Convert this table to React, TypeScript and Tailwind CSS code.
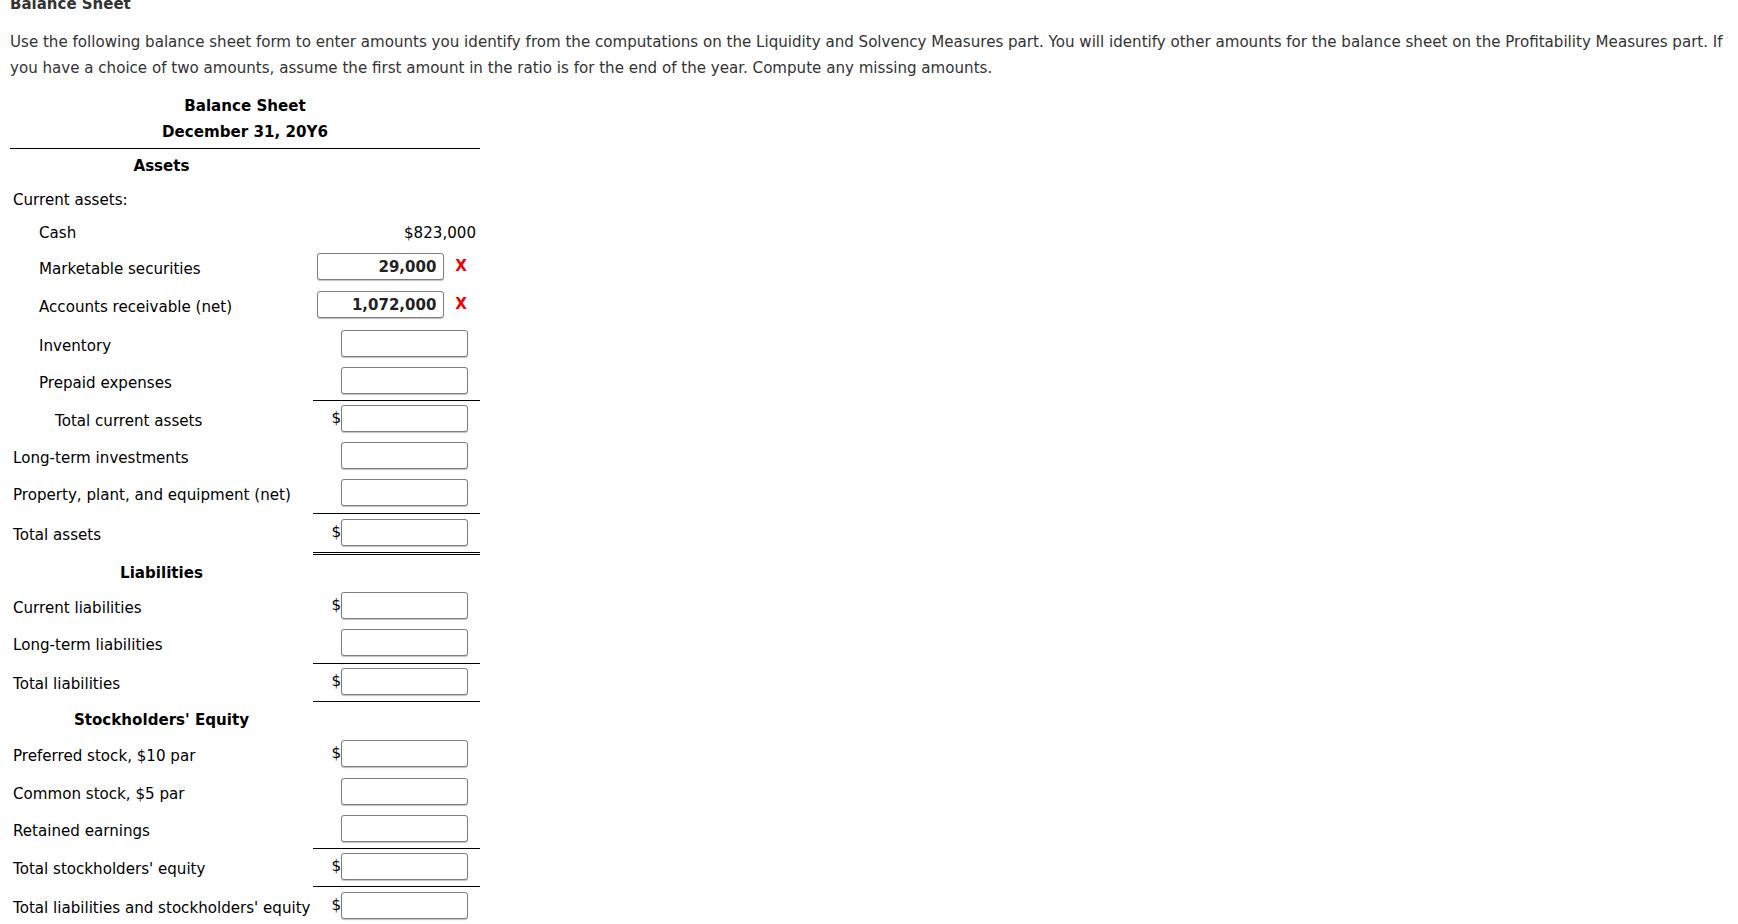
import React from "react";

type RowProps = {
  label?: string;
  indent?: number;
  h: number;
  pt?: number;
  dollar?: boolean;
  input?: string | null;
  wrong?: boolean;
  value?: string;
  lineTop?: boolean;
  lineBottom?: boolean;
  doubleBottom?: boolean;
};

function Box({ value }: { value?: string | null }) {
  return (
    <input
      type="text"
      readOnly
      defaultValue={value ?? ""}
      className="w-[127px] h-[27px] rounded-[3px] border border-[#7d7d7d] bg-white pr-[7px] text-right text-[15px] font-bold text-[#222] shadow-[0_1px_1px_rgba(0,0,0,0.25)] outline-none"
      style={{ fontFamily: '"DejaVu Sans", Verdana, sans-serif' }}
    />
  );
}

function Row({ label, indent = 0, h, pt = 4, dollar, input, wrong, value, lineTop, lineBottom, doubleBottom }: RowProps) {
  const pad = indent === 2 ? "pl-[45px]" : indent === 1 ? "pl-[29px]" : "pl-[3px]";
  const isText = input === undefined;
  return (
    <div className="flex" style={{ height: h }}>
      <div className={`w-[303px] ${pad} leading-[27px]`} style={{ paddingTop: pt + (lineTop ? 1 : 0) + 3 }}>
        {label}
      </div>
      <div
        className={`w-[167px] flex items-start justify-end ${lineTop ? "border-t border-black" : ""} ${
          lineBottom ? "border-b border-black" : ""
        } ${doubleBottom ? "border-b-[3px] border-double border-black" : ""}`}
        style={{ paddingTop: isText ? pt + 3 : pt, paddingRight: wrong ? 13 : 12 }}
      >
        {!isText ? (
          <>
            {dollar && <span className="leading-[27px]">$</span>}
            <Box value={input} />
            {wrong && <span className="ml-[11px] leading-[27px] font-bold text-[#ee0000]">X</span>}
          </>
        ) : (
          <span className="leading-[27px] -mr-[8px]">{value}</span>
        )}
      </div>
    </div>
  );
}

function Heading({ text, h, pt = 0 }: { text: string; h: number; pt?: number }) {
  return (
    <div className="flex" style={{ height: h }}>
      <div className="w-[303px] text-center font-bold" style={{ lineHeight: `${h - pt}px`, paddingTop: pt }}>
        {text}
      </div>
    </div>
  );
}

export default function App() {
  return (
    <div
      className="min-h-screen bg-white overflow-hidden"
      style={{ fontFamily: '"DejaVu Sans", Verdana, sans-serif' }}
    >
      <div className="px-[10px]">
        <div className="-mt-[6px] h-[20px] leading-[20px] text-[15px] font-bold text-[#333]">Balance Sheet</div>
        <p className="mt-[15px] text-[15.08px] leading-[26px] text-[#333] whitespace-nowrap">
          Use the following balance sheet form to enter amounts you identify from the computations on the Liquidity and
          Solvency Measures part. You will identify other amounts for the balance sheet on the Profitability Measures part. If
          <br />
          you have a choice of two amounts, assume the first amount in the ratio is for the end of the year. Compute any
          missing amounts.
        </p>

        <div className="mt-[12px] w-[470px] text-[15.1px] text-black">
          <div className="text-center font-bold leading-[26px] pb-[3px]">
            <div>Balance Sheet</div>
            <div>December 31, 20Y6</div>
          </div>
          <div className="border-t border-black">
            <Heading text="Assets" h={34} />
            <Row label="Current assets:" h={33} pt={1} value="" />
            <Row label="Cash" indent={1} h={32} pt={1} value="$823,000" />
            <Row label="Marketable securities" indent={1} h={38} pt={5} input="29,000" wrong />
            <Row label="Accounts receivable (net)" indent={1} h={38} pt={5} input="1,072,000" wrong />
            <Row label="Inventory" indent={1} h={38} pt={6} input="" />
            <Row label="Prepaid expenses" indent={1} h={38} pt={5} input="" />
            <Row label="Total current assets" indent={2} h={38} pt={4} input="" dollar lineTop />
            <Row label="Long-term investments" h={37} pt={4} input="" />
            <Row label="Property, plant, and equipment (net)" h={38} pt={4} input="" />
            <Row label="Total assets" h={42} pt={5} input="" dollar lineTop doubleBottom />
            <Heading text="Liabilities" h={33} pt={3} />
            <Row label="Current liabilities" h={37} pt={4} input="" dollar />
            <Row label="Long-term liabilities" h={38} pt={4} input="" />
            <Row label="Total liabilities" h={39} pt={4} input="" dollar lineTop lineBottom />
            <Heading text="Stockholders' Equity" h={34} pt={2} />
            <Row label="Preferred stock, $10 par" h={38} pt={4} input="" dollar />
            <Row label="Common stock, $5 par" h={37} pt={4} input="" />
            <Row label="Retained earnings" h={37} pt={4} input="" />
            <Row label="Total stockholders' equity" h={38} pt={4} input="" dollar lineTop />
            <Row label="Total liabilities and stockholders' equity" h={40} pt={5} input="" dollar lineTop />
          </div>
        </div>
      </div>
    </div>
  );
}
